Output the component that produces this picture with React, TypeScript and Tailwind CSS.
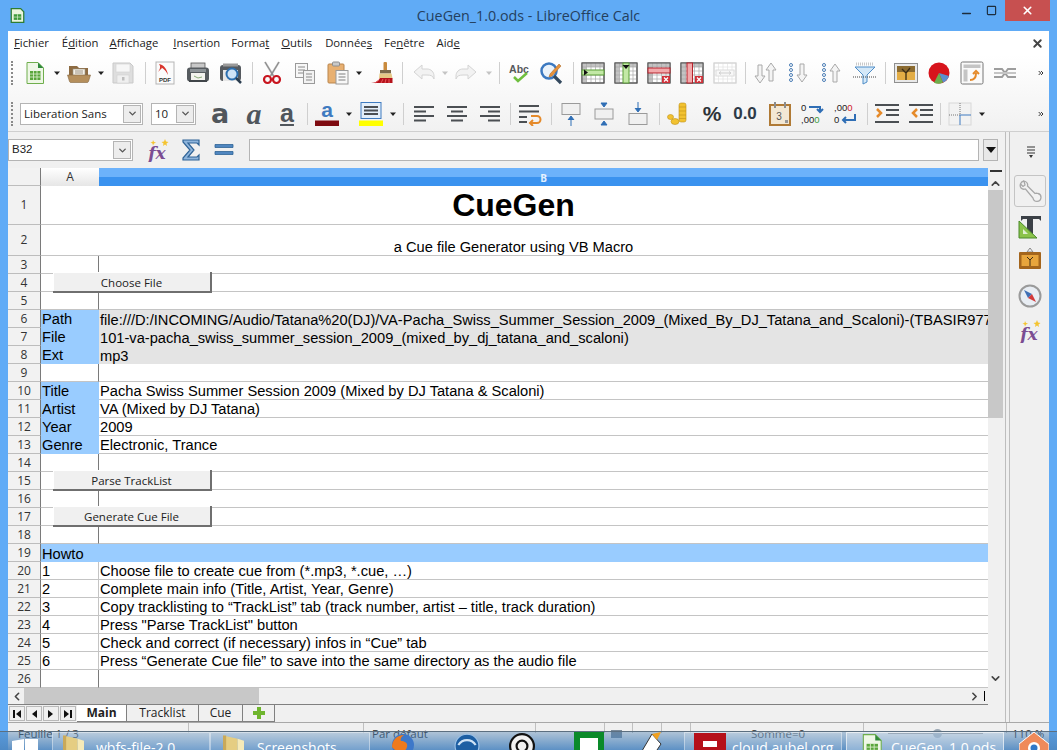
import type { ReactNode } from "react";
import { ChevronDown, ChevronLeft, ChevronRight, ChevronUp, ChevronsRight, Minus, Square, X } from "lucide-react";

type IconProps = { className?: string };

function Svg({ className = "", children }: IconProps & { children: ReactNode }) {
  return (
    <svg viewBox="0 0 24 24" className={`h-6 w-6 shrink-0 ${className}`}>
      {children}
    </svg>
  );
}

const NewCalc = ({ className }: IconProps) => (
  <Svg className={className}>
    <path d="M4 1.500h11l5.500 5.500v15.500H4z" fill="#eef7e6" stroke="#6fae4d" />
    <path d="M15 1.500l5.500 5.500H15z" fill="#2f8a3a" />
    <rect x="7" y="10" width="10.500" height="9" fill="#5aa63c" />
    <path d="M7 13h10.500M7 16h10.500M10.500 10v9M14 10v9" stroke="#dff0d0" strokeWidth=".8" />
  </Svg>
);
const OpenFolder = ({ className }: IconProps) => (
  <Svg className={className}>
    <path d="M2 5h8l2 2h9v8H2z" fill="#8d6b42" />
    <rect x="6" y="8" width="12" height="7" fill="#f3efe6" stroke="#9c9482" strokeWidth=".6" />
    <path d="M8 10h8M8 12h8" stroke="#8a8270" strokeWidth=".8" />
    <path d="M0.500 14h23l-2 6.500q-.3 1-1.500 1H4q-1.200 0-1.500-1z" fill="#b58f5c" stroke="#84663f" strokeWidth=".6" />
  </Svg>
);
const SaveDisk = ({ className }: IconProps) => (
  <Svg className={className}>
    <path d="M2 2h17l3 3v17H2z" fill="#dedede" stroke="#c9c9c9" />
    <rect x="5" y="3" width="14" height="8" fill="#f6f6f6" stroke="#cfcfcf" strokeWidth=".6" />
    <rect x="6" y="14" width="12" height="8" fill="#efefef" stroke="#cfcfcf" strokeWidth=".6" />
    <rect x="11" y="16" width="2.500" height="3.500" fill="#bdbdbd" />
  </Svg>
);
const PdfDoc = ({ className }: IconProps) => (
  <Svg className={className}>
    <rect x="3" y="1" width="18" height="22" fill="#fbfbfb" stroke="#b5b5b5" />
    <path d="M6 3c5 1 8 5 9 11-2-4-4-7-9-8l3 1-4 4c2-3 3-5 1-8z" fill="#d9352c" />
    <text x="12" y="21" textAnchor="middle" fontFamily="Liberation Sans" fontWeight="700" fontSize="6" fill="#333">PDF</text>
  </Svg>
);
const Printer = ({ className }: IconProps) => (
  <Svg className={className}>
    <rect x="5" y="2" width="14" height="6" fill="#c8c8c8" stroke="#555" strokeWidth=".8" />
    <rect x="1" y="6.500" width="22" height="14" rx="3" fill="#565b5f" />
    <rect x="4" y="8" width="16" height="3" fill="#8c9296" />
    <rect x="5" y="12" width="14" height="9" fill="#f3f3ee" />
    <path d="M8 15l4 2 4-1" stroke="#88aa77" fill="none" />
    <rect x="3" y="19" width="18" height="2" fill="#41464a" />
  </Svg>
);
const Preview = ({ className }: IconProps) => (
  <Svg className={className}>
    <rect x="1" y="4" width="21" height="16" rx="3" fill="#555a5f" />
    <rect x="4" y="2.500" width="15" height="3" fill="#9a9a9a" />
    <rect x="4" y="9" width="15" height="11" fill="#e7e7e7" />
    <circle cx="13" cy="13" r="5.500" fill="#cfe3f6" stroke="#2c6fb0" strokeWidth="2" />
    <path d="M17 17l5 5" stroke="#2c3e50" strokeWidth="2.500" />
  </Svg>
);
const Scissors = ({ className }: IconProps) => (
  <Svg className={className}>
    <path d="M5 1l8.500 14M19 1l-8.500 14" stroke="#b4b4b4" strokeWidth="2" />
    <path d="M5 1l8.500 14M19 1l-8.500 14" stroke="#6d6d6d" strokeWidth=".6" />
    <circle cx="7.500" cy="18.500" r="3.500" fill="none" stroke="#c8141e" strokeWidth="2.200" />
    <circle cx="16.500" cy="18.500" r="3.500" fill="none" stroke="#c8141e" strokeWidth="2.200" />
  </Svg>
);
const CopyDocs = ({ className }: IconProps) => (
  <Svg className={className}>
    <rect x="2.500" y="2.500" width="12" height="14" fill="#f7f7f7" stroke="#9a9a9a" />
    <path d="M5 6h7M5 9h7M5 12h5" stroke="#8a8a8a" />
    <rect x="10.500" y="9.500" width="11" height="13" fill="#f2f2f2" stroke="#9a9a9a" />
    <path d="M13 13h6M13 16h6M13 19h6" stroke="#8a8a8a" />
  </Svg>
);
const Paste = ({ className }: IconProps) => (
  <Svg className={className}>
    <rect x="2" y="3" width="16" height="19" rx="1" fill="#e8b071" stroke="#b9854d" />
    <rect x="6.500" y="1" width="7" height="4" rx="1" fill="#c9c9c9" stroke="#8e8e8e" />
    <rect x="10" y="9.500" width="12" height="13.500" fill="#f8f8f8" stroke="#9a9a9a" />
    <path d="M12.500 13h7M12.500 16h7M12.500 19h7" stroke="#7f7f7f" />
  </Svg>
);
const Brush = ({ className }: IconProps) => (
  <Svg className={className}>
    <rect x="13.500" y="1" width="3.500" height="9" rx="1" fill="#c98a3c" />
    <rect x="10" y="9" width="11" height="3.500" fill="#7b6a4b" />
    <path d="M9.500 12.500h12l1 5H9z" fill="#e6c987" />
    <path d="M1 22c5 0 8-3 9-5h12.500v5z" fill="#b5121b" />
    <path d="M5 22l4-3M11 22l2-4M15 22l1-4M19 22v-4" stroke="#e7555c" />
  </Svg>
);
const UndoIcon = ({ className }: IconProps) => (
  <Svg className={className}>
    <path d="M2 11l8-7v4h5c4 0 7 3 7 7v3c-1-3-3-4-7-4h-5v4z" fill="#f2f2f2" stroke="#d4d4d4" />
  </Svg>
);
const RedoIcon = ({ className }: IconProps) => (
  <Svg className={className}>
    <path d="M22 11l-8-7v4H9c-4 0-7 3-7 7v3c1-3 3-4 7-4h5v4z" fill="#f2f2f2" stroke="#d4d4d4" />
  </Svg>
);
const Spell = ({ className }: IconProps) => (
  <Svg className={className}>
    <text x="12" y="12" textAnchor="middle" fontFamily="Liberation Sans" fontWeight="700" fontSize="10.500" fill="#55585c">Abc</text>
    <path d="M7 16l4 4 9-8" fill="none" stroke="#6fbf3f" strokeWidth="2.500" />
  </Svg>
);
const FindReplace = ({ className }: IconProps) => (
  <Svg className={className}>
    <circle cx="10" cy="10" r="7.500" fill="#eaf2fa" stroke="#3b78c0" strokeWidth="2.500" />
    <path d="M15 15l7 7" stroke="#34495e" strokeWidth="3.200" />
    <path d="M11 13l9-10 2 2-9 10-3 1z" fill="#e8923a" stroke="#a35f1c" strokeWidth=".5" />
  </Svg>
);

function TableBase({ className, children, faded }: IconProps & { children?: ReactNode; faded?: boolean }) {
  const stroke = faded ? "#d5d5d5" : "#555";
  const line = faded ? "#e3e3e3" : "#a8a8a8";
  return (
    <Svg className={className}>
      <rect x="1" y="2" width="22" height="20" fill="#fff" stroke={stroke} />
      {!faded && <path d="M1 2h22v4H5.500v16H1z" fill="#c3c3c3" />}
      <path d="M1 6h22M1 10h22M1 14h22M1 18h22M5.500 2v20M10 2v20M14.500 2v20M19 2v20" stroke={line} strokeWidth=".7" />
      <rect x="1" y="2" width="22" height="20" fill="none" stroke={stroke} />
      {children}
    </Svg>
  );
}
const InsRow = ({ className }: IconProps) => (
  <TableBase className={className}>
    <rect x="1" y="9" width="22" height="5" fill="#c3e8a6" stroke="#5a9e36" />
    <path d="M3 8.500l4 3-4 3z" fill="#111" />
  </TableBase>
);
const InsCol = ({ className }: IconProps) => (
  <TableBase className={className}>
    <rect x="9" y="2" width="6" height="20" fill="#c3e8a6" stroke="#5a9e36" />
    <path d="M8.500 4h7L12 8z" fill="#111" />
  </TableBase>
);
const DelRow = ({ className }: IconProps) => (
  <TableBase className={className}>
    <rect x="1" y="7" width="22" height="5" fill="#f2a9ab" stroke="#b5212a" />
    <rect x="15" y="15" width="8" height="7" fill="#d0313a" />
    <path d="M17 16.500l4 4M21 16.500l-4 4" stroke="#fff" strokeWidth="1.300" />
  </TableBase>
);
const DelCol = ({ className }: IconProps) => (
  <TableBase className={className}>
    <rect x="7" y="2" width="5.500" height="20" fill="#f2a9ab" stroke="#b5212a" />
    <rect x="15" y="15" width="8" height="7" fill="#d0313a" />
    <path d="M17 16.500l4 4M21 16.500l-4 4" stroke="#fff" strokeWidth="1.300" />
  </TableBase>
);
const Merge = ({ className }: IconProps) => (
  <TableBase className={className} faded>
    <rect x="3" y="9" width="18" height="6" fill="#f7f7f7" stroke="#dcdcdc" />
    <path d="M6 12h12M8 10.500L6 12l2 1.500M16 10.500l2 1.500-2 1.500" fill="none" stroke="#cfcfcf" />
  </TableBase>
);

const ArrowUpOutline = ({ x, y = 0 }: { x: number; y?: number }) => (
  <path transform={`translate(${x} ${y})`} d="M5 2l5 7H7v11H3V9H0z" fill="#f4f4f4" stroke="#a9a9a9" />
);
const ArrowDownOutline = ({ x, y = 0 }: { x: number; y?: number }) => (
  <path transform={`translate(${x} ${y})`} d="M5 20l5-7H7V2H3v11H0z" fill="#f4f4f4" stroke="#a9a9a9" />
);
const BlueDots = () => (
  <g fill="#fff" stroke="#4a7db5">
    <circle cx="4" cy="4" r="1.500" />
    <circle cx="4" cy="9" r="1.500" />
    <circle cx="4" cy="14" r="1.500" />
    <circle cx="4" cy="19" r="1.500" />
  </g>
);
const SortBoth = ({ className }: IconProps) => (
  <Svg className={className}>
    <ArrowDownOutline x={1} y={2} />
    <ArrowUpOutline x={12} y={0} />
  </Svg>
);
const SortAsc = ({ className }: IconProps) => (
  <Svg className={className}>
    <BlueDots />
    <ArrowDownOutline x={10} y={1} />
  </Svg>
);
const SortDesc = ({ className }: IconProps) => (
  <Svg className={className}>
    <BlueDots />
    <ArrowUpOutline x={10} y={1} />
  </Svg>
);
const Filter = ({ className }: IconProps) => (
  <Svg className={className}>
    <path d="M3 3h18" stroke="#c9c9c9" strokeDasharray="1 1" strokeWidth="3" />
    <path d="M2 6h20l-8 8v7l-4 2v-9z" fill="#d4e8f8" stroke="#4f8dc7" />
    <path d="M0 16h24" stroke="#444" strokeDasharray="1 1" />
  </Svg>
);
const ImageIcon = ({ className }: IconProps) => (
  <Svg className={className}>
    <rect x="0.500" y="2.500" width="23" height="19" fill="#e9e9e9" stroke="#8f8f8f" />
    <rect x="3" y="5" width="18" height="14" fill="#e3ad45" />
    <rect x="3" y="5" width="18" height="6" fill="#8b6b30" />
    <path d="M12 19v-7l-4-4M12 12l4-5" stroke="#3c2d15" fill="none" strokeWidth="1.300" />
  </Svg>
);
const ChartPie = ({ className }: IconProps) => (
  <Svg className={className}>
    <circle cx="12" cy="12" r="10.500" fill="#d7141c" />
    <path d="M12 12l10 3a10.500 10.500 0 0 1-6 6.500z" fill="#5b8fcf" />
    <path d="M12 12l4 9.500a10.500 10.500 0 0 1-9 .2z" fill="#6fae4d" />
  </Svg>
);
const FrameIcon = ({ className }: IconProps) => (
  <Svg className={className}>
    <rect x="1" y="1" width="22" height="22" rx="1.500" fill="#fafafa" stroke="#777" />
    <rect x="3.500" y="3.500" width="17" height="3.500" fill="#c4c4c4" />
    <rect x="3.500" y="8.500" width="4" height="12" fill="#c4c4c4" />
    <path d="M10 19c5 0 6-3 6-7M13 13l3-3 3 3" fill="none" stroke="#e58a2a" strokeWidth="2" />
  </Svg>
);
const LinkIcon = ({ className }: IconProps) => (
  <Svg className={className}>
    <path d="M1 8h8l6 8h8M1 16h8l6-8h8" fill="none" stroke="#9d9d9d" strokeWidth="2" />
    <path d="M1 12h22" stroke="#c5c5c5" strokeWidth="2" />
  </Svg>
);

const FontBold = ({ className }: IconProps) => (
  <span className={`flex h-6 w-6 shrink-0 items-center justify-center font-['DejaVu_Sans',sans-serif] text-[27px] font-bold leading-none text-[#50565c] ${className}`}>
    a
  </span>
);
const FontItalic = ({ className }: IconProps) => (
  <span className={`flex h-6 w-6 shrink-0 items-center justify-center font-['Liberation_Serif',serif] text-[30px] font-bold italic leading-none text-[#50565c] ${className}`}>
    a
  </span>
);
const FontUnder = ({ className }: IconProps) => (
  <span className={`flex h-6 w-6 shrink-0 items-center justify-center font-['Liberation_Sans',sans-serif] text-[25px] font-bold leading-none text-[#50565c] underline decoration-2 underline-offset-2 ${className}`}>
    a
  </span>
);
const FontColor = ({ className }: IconProps) => (
  <Svg className={className}>
    <text x="12" y="15" textAnchor="middle" fontFamily="Liberation Sans" fontWeight="700" fontSize="21" fill="#3f7bc0">a</text>
    <rect x="0" y="18.500" width="24" height="5.500" fill="#7e0a10" />
  </Svg>
);
const BgColor = ({ className }: IconProps) => (
  <Svg className={className}>
    <rect x="2" y="0.500" width="20" height="16" fill="#e4effa" stroke="#3f7bc0" />
    <path d="M5 5h14M5 8.500h14M5 12h14" stroke="#4b4f53" strokeWidth="2" />
    <rect x="0" y="18.500" width="24" height="5.500" fill="#ffff00" />
  </Svg>
);
const Align = ({ className, kind }: IconProps & { kind: "l" | "c" | "r" }) => {
  const d =
    kind === "l"
      ? "M2 5h20M2 9.500h12M2 14h20M2 18.500h12"
      : kind === "c"
        ? "M2 5h20M6 9.500h12M2 14h20M6 18.500h12"
        : "M2 5h20M10 9.500h12M2 14h20M10 18.500h12";
  return (
    <Svg className={className}>
      <path d={d} stroke="#4b4f53" strokeWidth="2" />
    </Svg>
  );
};
const WrapText = ({ className }: IconProps) => (
  <Svg className={className}>
    <path d="M1 4h20M1 9.500h20M1 15h8M1 20h8" stroke="#4b4f53" strokeWidth="2" />
    <path d="M13 14h6a3.500 3.500 0 0 1 0 7h-6M15 18l-3 3 3 3" fill="none" stroke="#e58a2a" strokeWidth="2" />
  </Svg>
);
const VAlign = ({ className, kind }: IconProps & { kind: "t" | "m" | "b" }) => (
  <Svg className={className}>
    {kind === "t" && (
      <>
        <rect x="3" y="1.500" width="18" height="11" fill="#f0f0f0" stroke="#9a9a9a" />
        <path d="M12 24v-8M9 18l3-4 3 4" fill="#2f6eb5" stroke="#2f6eb5" />
      </>
    )}
    {kind === "m" && (
      <>
        <rect x="3" y="7" width="18" height="10" fill="#f0f0f0" stroke="#9a9a9a" />
        <path d="M9 1h6l-3 4zM9 23h6l-3-4z" fill="#2f6eb5" stroke="#2f6eb5" />
      </>
    )}
    {kind === "b" && (
      <>
        <rect x="3" y="11.500" width="18" height="11" fill="#f0f0f0" stroke="#9a9a9a" />
        <path d="M12 0v8M9 6l3 4 3-4" fill="#2f6eb5" stroke="#2f6eb5" />
      </>
    )}
  </Svg>
);
const Coins = ({ className }: IconProps) => (
  <Svg className={className}>
    <rect x="12" y="1" width="7" height="19" rx="2" fill="#f2c230" stroke="#c0921a" strokeWidth=".6" />
    <path d="M12 5h7M12 9h7M12 13h7M12 16.500h7" stroke="#c0921a" strokeWidth=".6" />
    <ellipse cx="8" cy="19.500" rx="4" ry="3" fill="#f2c230" stroke="#c0921a" strokeWidth=".6" />
    <ellipse cx="3.500" cy="15" rx="3" ry="2.500" fill="#f2c230" stroke="#c0921a" strokeWidth=".6" />
  </Svg>
);
const Calendar = ({ className }: IconProps) => (
  <Svg className={className}>
    <rect x="2" y="3" width="20" height="20" fill="#f3e8d4" stroke="#b07a35" strokeWidth="2" />
    <path d="M7 0v6M17 0v6" stroke="#8d8d8d" strokeWidth="2" />
    <text x="11" y="18" textAnchor="middle" fontFamily="Liberation Sans" fontSize="10" fill="#555">3</text>
    <rect x="17" y="18" width="3" height="3" fill="#999" />
  </Svg>
);
const DecAdd = ({ className }: IconProps) => (
  <Svg className={className}>
    <text x="0" y="9" fontFamily="Liberation Sans" fontSize="9.500" fill="#222">0</text>
    <path d="M8 5h11v4M16 7l3 3 3-3" fill="none" stroke="#2f6eb5" strokeWidth="2" />
    <text x="0" y="21" fontFamily="Liberation Sans" fontSize="9.500" fill="#222">,00<tspan fill="#3a9a3a">0</tspan></text>
  </Svg>
);
const DecDel = ({ className }: IconProps) => (
  <Svg className={className}>
    <text x="1" y="9" fontFamily="Liberation Sans" fontSize="9.500" fill="#222">,00<tspan fill="#d0202a">0</tspan></text>
    <text x="1" y="21" fontFamily="Liberation Sans" fontSize="9.500" fill="#222">0</text>
    <path d="M22 12v6H10M13 15l-3 3 3 3" fill="none" stroke="#2f6eb5" strokeWidth="2" />
  </Svg>
);
const Indent = ({ className, back }: IconProps & { back?: boolean }) => (
  <Svg className={className}>
    <path d="M0 3h24M11 8h13M11 13h13M0 20h24" stroke="#4b4f53" strokeWidth="2" />
    <path d={back ? "M8 7l-4 4 4 4" : "M2 7l4 4-4 4"} fill="none" stroke="#e58a2a" strokeWidth="2.500" />
  </Svg>
);
const Borders = ({ className }: IconProps) => (
  <Svg className={className}>
    <rect x="1" y="1" width="22" height="22" fill="#f2f2f2" stroke="#d8d8d8" />
    <path d="M1 13h11" stroke="#777" strokeDasharray="1 1" />
    <path d="M12 1v12" stroke="#777" strokeDasharray="1 1" />
    <path d="M12 13h11M12 13v10" stroke="#3f7bc0" />
  </Svg>
);
const FxIcon = ({ className }: IconProps) => (
  <Svg className={className}>
    <text x="11" y="21" textAnchor="middle" fontFamily="DejaVu Serif" fontStyle="italic" fontWeight="700" fontSize="17" fill="#7b4d92">fx</text>
    <path d="M7 2l1 2 2 .5-2 1-1 2-.5-2-2-1 2-.5zM19 1l1 2.500 2.500.5-2 1.500.5 2.500-2-1.500-2 1.500.5-2.500-2-1.500 2.500-.5z" fill="#f4c430" />
  </Svg>
);
const SigmaIcon = ({ className }: IconProps) => (
  <Svg className={className}>
    <path d="M4 2h16v5l-2-2H9l6 7-6 7h9l2-2v5H4v-2l7-8-7-8z" fill="#8fb5dc" stroke="#2f6396" strokeWidth="1.200" />
  </Svg>
);
const EqualsIcon = ({ className }: IconProps) => (
  <Svg className={className}>
    <path d="M3 6.500h18v3H3zM3 13.500h18v3H3z" fill="#4f86c0" stroke="#2f6396" strokeWidth=".8" />
  </Svg>
);

const Sep = ({ className }: IconProps) => <div className={`h-[22px] w-px shrink-0 bg-[#cfcfcf] ${className}`} />;
const Caret = ({ className, off }: IconProps & { off?: boolean }) => (
  <svg viewBox="0 0 8 8" className={`h-2 w-2 shrink-0 ${className}`}>
    <path d="M1 2.500h6L4 6z" fill={off ? "#c4c4c4" : "#222"} />
  </svg>
);
const Gripper = () => (
  <div className="ml-[3px] h-[24px] w-[3px] shrink-0 border-l-2 border-dotted border-[#8a8a8a]" />
);
const More = ({ className }: IconProps) => (
  <ChevronsRight size={10} strokeWidth={3} className={`w-2 shrink-0 text-[#333] ${className}`} />
);

function Combo({ className, label, btn }: IconProps & { label: string; btn: string }) {
  return (
    <div className={`flex h-[22px] shrink-0 items-center justify-between border border-[#b4b4b4] bg-white pl-[3px] pr-px text-[11.500px] text-[#222] ${className}`}>
      <span className="truncate">{label}</span>
      <span className={`flex h-[18px] items-center justify-center border border-[#b4b4b4] bg-[#ededed] ${btn}`}>
        <ChevronDown size={11} strokeWidth={3} className="text-[#555]" />
      </span>
    </div>
  );
}

const menus: [string, string, string, string][] = [
  ["ml-[6px]", "", "F", "ichier"],
  ["ml-[13px]", "É", "d", "ition"],
  ["ml-[11px]", "", "A", "ffichage"],
  ["ml-[15px]", "", "I", "nsertion"],
  ["ml-[11px]", "Forma", "t", ""],
  ["ml-[12px]", "", "O", "utils"],
  ["ml-[13px]", "Donnée", "s", ""],
  ["ml-[12px]", "Fe", "n", "être"],
  ["ml-[12px]", "Aid", "e", ""],
];

type Row = { n: number; h: string; a?: string; b?: string; tone?: "info" | "meta" | "head" | "step"; btn?: string; merged?: "title" | "sub" };

const rows: Row[] = [
  { n: 1, h: "h-[39px]", merged: "title", b: "CueGen" },
  { n: 2, h: "h-[31px]", merged: "sub", b: "a Cue file Generator using VB Macro" },
  { n: 3, h: "h-[18px]" },
  { n: 4, h: "h-[18px]", btn: "Choose File" },
  { n: 5, h: "h-[18px]" },
  { n: 6, h: "h-[18px]", tone: "info", a: "Path", b: "file:///D:/INCOMING/Audio/Tatana%20(DJ)/VA-Pacha_Swiss_Summer_Session_2009_(Mixed_By_DJ_Tatana_and_Scaloni)-(TBASIR977)-WEB-2009" },
  { n: 7, h: "h-[18px]", tone: "info", a: "File", b: "101-va-pacha_swiss_summer_session_2009_(mixed_by_dj_tatana_and_scaloni)" },
  { n: 8, h: "h-[18px]", tone: "info", a: "Ext", b: "mp3" },
  { n: 9, h: "h-[18px]" },
  { n: 10, h: "h-[18px]", tone: "meta", a: "Title", b: "Pacha Swiss Summer Session 2009 (Mixed by DJ Tatana & Scaloni)" },
  { n: 11, h: "h-[18px]", tone: "meta", a: "Artist", b: "VA (Mixed by DJ Tatana)" },
  { n: 12, h: "h-[18px]", tone: "meta", a: "Year", b: "2009" },
  { n: 13, h: "h-[18px]", tone: "meta", a: "Genre", b: "Electronic, Trance" },
  { n: 14, h: "h-[18px]" },
  { n: 15, h: "h-[18px]", btn: "Parse TrackList" },
  { n: 16, h: "h-[18px]" },
  { n: 17, h: "h-[18px]", btn: "Generate Cue File" },
  { n: 18, h: "h-[18px]" },
  { n: 19, h: "h-[18px]", tone: "head", a: "Howto" },
  { n: 20, h: "h-[18px]", tone: "step", a: "1", b: "Choose file to create cue from (*.mp3, *.cue, …)" },
  { n: 21, h: "h-[18px]", tone: "step", a: "2", b: "Complete main info (Title, Artist, Year, Genre)" },
  { n: 22, h: "h-[18px]", tone: "step", a: "3", b: "Copy tracklisting to “TrackList” tab (track number, artist – title, track duration)" },
  { n: 23, h: "h-[18px]", tone: "step", a: "4", b: "Press \"Parse TrackList\" button" },
  { n: 24, h: "h-[18px]", tone: "step", a: "5", b: "Check and correct (if necessary) infos in “Cue” tab" },
  { n: 25, h: "h-[18px]", tone: "step", a: "6", b: "Press “Generate Cue file” to save into the same directory as the audio file" },
  { n: 26, h: "h-[18px]" },
];

function SheetRow({ row }: { row: Row }) {
  const { n, h, a, b, tone, btn, merged } = row;
  const blue = tone === "info" || tone === "meta";
  return (
    <div className={`relative flex shrink-0 ${h}`}>
      <div className="flex w-[33px] shrink-0 items-center justify-center border-r border-b border-r-[#7a7a7a] border-b-[#bdbdbd] bg-[#f2f2f2] font-['Open_Sans',sans-serif] text-[12px] text-[#333]">
        {n}
      </div>
      {merged ? (
        <div
          className={`flex flex-1 justify-center border-b border-[#c4c4c4] pr-[2px] ${
            merged === "title" ? "items-center text-[32px] font-bold leading-none" : "items-end text-[14.670px] leading-[16px]"
          }`}
        >
          {b}
        </div>
      ) : tone === "head" ? (
        <div className="flex flex-1 items-center bg-[#99ccff] pl-px pt-px text-[14.670px]">{a}</div>
      ) : (
        <>
          <div
            className={`flex w-[58px] shrink-0 items-center border-r pl-px pt-px text-[14.670px] ${
              blue
                ? "border-b border-[#99ccff] bg-[#99ccff]"
                : tone === "step"
                  ? "border-b border-b-[#c4c4c4] border-r-[#c4c4c4]"
                  : "border-b border-b-[#c4c4c4] border-r-[#7a7a7a]"
            }`}
          >
            {a}
          </div>
          <div
            className={`flex min-w-0 flex-1 items-center overflow-hidden whitespace-nowrap pl-px pt-px text-[14.670px] ${
              tone === "info" ? "bg-[#e4e4e4]" : "border-b border-[#c4c4c4]"
            }`}
          >
            {b}
          </div>
        </>
      )}
      {btn && (
        <button className="absolute left-[45px] top-[-2px] z-10 h-[21px] w-[159px] border-r-2 border-b-2 border-r-[#6f6f6f] border-b-[#6f6f6f] bg-[#f0f0f0] pt-[2px] font-['Open_Sans',sans-serif] text-[11.500px] text-[#222] shadow-[inset_1px_1px_0_#fff]">
          {btn}
        </button>
      )}
    </div>
  );
}

const tabs = [
  { label: "Main", cls: "w-[50px] bg-white font-bold" },
  { label: "Tracklist", cls: "w-[72px]" },
  { label: "Cue", cls: "w-[44px]" },
];

const statusSeps = [
  "ml-[180px]", "ml-[174px]", "ml-[171px]", "ml-[68px]", "ml-[27px]", "ml-[28px]", "ml-[28px]", "ml-[172px]", "ml-[142px]",
];

function NavButton({ d }: { d: string }) {
  return (
    <span className="flex h-[15px] w-[16px] items-center justify-center border border-[#b9b9b9] bg-[#f0f0f0]">
      <svg viewBox="0 0 12 12" className="h-3 w-3">
        <path d={d} fill="#111" />
      </svg>
    </span>
  );
}

const FolderGlyph = ({ className }: IconProps) => (
  <svg viewBox="0 0 20 24" className={`h-[26px] w-[21px] shrink-0 ${className}`}>
    <path d="M0 2l14 3v19H0z" fill="#e5cd82" />
    <path d="M14 5l6 2v17h-6z" fill="#f6eab8" />
    <path d="M0 2l3 0v22H0z" fill="#c9a95a" />
  </svg>
);

function TaskButton({ className, icon, label }: IconProps & { icon: ReactNode; label: string }) {
  return (
    <div className={`flex h-[20px] shrink-0 items-start gap-[6px] overflow-hidden border border-white/40 bg-white/15 pl-[9px] text-[14px] leading-[29px] text-white ${className}`}>
      {icon}
      <span className="whitespace-nowrap">{label}</span>
    </div>
  );
}

function Taskbar() {
  return (
    <div className="absolute inset-x-0 top-[731px] flex h-[19px] items-start overflow-hidden border-t border-[#5c6f80] bg-gradient-to-b from-[#4c7fb0]/40 to-[#4c86c0]/90 font-['Open_Sans',sans-serif]">
      <svg viewBox="0 0 26 12" className="ml-[12px] mt-[7px] h-[12px] w-[26px] shrink-0">
        <path d="M0 2l12-2v12H0zM13 0l13-2v14H13z" fill="#fff" />
      </svg>
      <TaskButton className="ml-[14px] w-[158px]" icon={<FolderGlyph className="ml-px mr-[6px]" />} label="wbfs-file-2.0" />
      <TaskButton className="w-[160px]" icon={<FolderGlyph className="ml-[3px] mr-[7px]" />} label="Screenshots" />
      <svg viewBox="0 0 24 24" className="ml-[20px] mt-[1px] h-[24px] w-[24px] shrink-0">
        <circle cx="13" cy="12" r="11" fill="#3d78c9" />
        <path d="M2 14c0-7 5-12 12-12-3 2-4 4-3 6 4 0 7 2 6 6-2 6-8 8-15 0z" fill="#ee7a1d" />
      </svg>
      <svg viewBox="0 0 24 24" className="ml-[40px] h-[26px] w-[26px] shrink-0">
        <circle cx="12" cy="13" r="11" fill="#1d5fa3" stroke="#9dc3e8" />
        <path d="M4 12c4-6 12-6 16 0" fill="none" stroke="#cfe3f5" strokeWidth="2" />
      </svg>
      <svg viewBox="0 0 24 24" className="ml-[29px] h-[26px] w-[26px] shrink-0">
        <circle cx="12" cy="13" r="11" fill="#f2f2f2" stroke="#111" strokeWidth="2" />
        <circle cx="12" cy="13" r="5" fill="none" stroke="#111" strokeWidth="2" />
      </svg>
      <div className="ml-[39px] flex h-[24px] w-[30px] shrink-0 justify-center bg-[#0a8a2a] pt-[6px]">
        <div className="h-[14px] w-[18px] bg-white" />
      </div>
      <svg viewBox="0 0 24 24" className="ml-[30px] h-[24px] w-[30px] shrink-0">
        <path d="M2 24L15 2l9 10-8 12z" fill="#fff" stroke="#333" />
        <path d="M15 2l9-2-4 8z" fill="#f0a020" />
      </svg>
      <TaskButton
        className="ml-[20px] w-[158px]"
        icon={
          <span className="block h-[26px] w-[32px] shrink-0 bg-[#b5101a] pl-[9px] pt-[8px]">
            <span className="block h-[6px] w-[14px] bg-white" />
          </span>
        }
        label="cloud.aubel.org"
      />
      <TaskButton
        className="ml-[4px] w-[158px] border-white/60 bg-white/30"
        icon={
          <span className="ml-[3px] block h-[26px] w-[26px] shrink-0">
            <NewCalc className="h-[26px]! w-[26px]!" />
          </span>
        }
        label="CueGen_1.0.ods"
      />
      <svg viewBox="0 0 30 24" className="ml-[15px] h-[24px] w-[30px] shrink-0">
        <path d="M15 0l15 12v12H0V12z" fill="#ef8a5a" stroke="#fff" />
        <circle cx="15" cy="16" r="6" fill="#fff" />
        <circle cx="15" cy="16" r="3.500" fill="#2f78c8" />
      </svg>
    </div>
  );
}

export default function App() {
  return (
    <div className="relative h-[750px] w-[1057px] overflow-hidden bg-[#60abf6] font-['Liberation_Sans',sans-serif] text-black">
      {/* title bar */}
      <div className="relative flex h-[31px] items-start">
        <svg viewBox="0 0 24 24" className="ml-[10px] mt-[7px] h-[17px] w-[15px]">
          <path d="M2 1h15l5 5v17H2z" fill="#eaf5de" stroke="#2f7d32" strokeWidth="2" />
          <rect x="6" y="10" width="12" height="9" fill="#3f9a3a" />
          <path d="M6 14.500h12M12 10v9" stroke="#e6f5da" />
        </svg>
        <div className="absolute inset-x-0 top-[5px] text-center font-['Open_Sans',sans-serif] text-[14.300px] leading-[22px] text-[#24405e]">
          CueGen_1.0.ods - LibreOffice Calc
        </div>
        <div className="relative ml-auto mr-[7px] flex h-[21px] items-center">
          <Minus size={13} strokeWidth={3} className="mr-[13px] mt-[6px] text-[#1d2d3d]" />
          <Square size={11} strokeWidth={2.5} className="mr-[8px] text-[#1d2d3d]" />
          <span className="flex h-[21px] w-[45px] items-center justify-center bg-[#c75050]">
            <X size={13} strokeWidth={3} className="text-white" />
          </span>
        </div>
      </div>

      <div className="mr-[8px] ml-[8px] flex h-[719px] flex-col bg-[#f0f0f0]">
        {/* menu */}
        <div className="flex h-[24px] items-center bg-white font-['Open_Sans',sans-serif] text-[11.300px] text-[#222]">
          {menus.map(([ml, pre, key, post]) => (
            <span key={pre + key + post} className={ml}>
              {pre}
              <u>{key}</u>
              {post}
            </span>
          ))}
          <X size={13} strokeWidth={3.5} className="ml-auto mr-[5px] text-[#444]" />
        </div>

        <div className="bg-gradient-to-b from-white to-[#f1f1f1] font-['Open_Sans',sans-serif]">
          {/* standard toolbar */}
          <div className="flex h-[36px] items-center">
            <Gripper />
            <NewCalc className="ml-[9px]" />
            <Caret className="ml-[6px]" />
            <OpenFolder className="ml-[6px]" />
            <Caret className="ml-[6px]" />
            <SaveDisk className="ml-[6px]" />
            <Sep className="ml-[10px]" />
            <PdfDoc className="ml-[7px]" />
            <Printer className="ml-[9px]" />
            <Preview className="ml-[9px]" />
            <Sep className="ml-[9px]" />
            <Scissors className="ml-[7px]" />
            <CopyDocs className="ml-[9px]" />
            <Paste className="ml-[9px]" />
            <Caret className="ml-[5px]" />
            <Brush className="ml-[7px]" />
            <Sep className="ml-[8px]" />
            <UndoIcon className="ml-[9px]" />
            <Caret className="ml-[5px]" off />
            <RedoIcon className="ml-[5px]" />
            <Caret className="ml-[7px]" off />
            <Sep className="ml-[6px]" />
            <Spell className="ml-[7px]" />
            <FindReplace className="ml-[8px]" />
            <Sep className="ml-[10px]" />
            <InsRow className="ml-[7px]" />
            <InsCol className="ml-[9px]" />
            <DelRow className="ml-[9px]" />
            <DelCol className="ml-[9px]" />
            <Merge className="ml-[9px]" />
            <Sep className="ml-[8px]" />
            <SortBoth className="ml-[8px]" />
            <SortAsc className="ml-[9px]" />
            <SortDesc className="ml-[9px]" />
            <Filter className="ml-[9px]" />
            <Sep className="ml-[8px]" />
            <ImageIcon className="ml-[8px]" />
            <ChartPie className="ml-[9px]" />
            <FrameIcon className="ml-[9px]" />
            <LinkIcon className="ml-[9px]" />
            <More className="ml-[20px]" />
          </div>

          {/* formatting toolbar */}
          <div className="flex h-[41px] items-center border-b border-[#cfcfcf] pt-[5px]">
            <Gripper />
            <Combo className="ml-[6px] w-[123px]" label="Liberation Sans" btn="w-[18px]" />
            <Combo className="ml-[8px] w-[45px]" label="10" btn="w-[18px]" />
            <FontBold className="ml-[12px]" />
            <FontItalic className="ml-[10px]" />
            <FontUnder className="ml-[9px]" />
            <Sep className="ml-[8px]" />
            <FontColor className="ml-[7px]" />
            <Caret className="ml-[6px]" />
            <BgColor className="ml-[6px]" />
            <Caret className="ml-[6px]" />
            <Sep className="ml-[6px]" />
            <Align className="ml-[8px]" kind="l" />
            <Align className="ml-[9px]" kind="c" />
            <Align className="ml-[9px]" kind="r" />
            <Sep className="ml-[8px]" />
            <WrapText className="ml-[7px]" />
            <Sep className="ml-[9px]" />
            <VAlign className="ml-[7px]" kind="t" />
            <VAlign className="ml-[9px]" kind="m" />
            <VAlign className="ml-[10px]" kind="b" />
            <Sep className="ml-[9px]" />
            <Coins className="ml-[7px]" />
            <span className="ml-[9px] w-6 shrink-0 text-center font-['Liberation_Sans',sans-serif] text-[21px] font-bold leading-none text-[#2d3338]">%</span>
            <span className="ml-[9px] w-6 shrink-0 whitespace-nowrap text-center font-['Liberation_Sans',sans-serif] text-[17px] font-bold leading-none text-[#2d3a47]">0.0</span>
            <Calendar className="ml-[11px]" />
            <DecAdd className="ml-[9px]" />
            <DecDel className="ml-[8px]" />
            <Sep className="ml-[10px]" />
            <Indent className="ml-[7px]" />
            <Indent className="ml-[10px]" back />
            <Sep className="ml-[7px]" />
            <Borders className="ml-[7px]" />
            <Caret className="ml-[6px]" />
            <More className="ml-[51px]" />
          </div>
        </div>

        <div className="flex min-h-0 flex-1">
          {/* sheet column */}
          <div className="flex w-[997px] shrink-0 flex-col">
            {/* formula bar */}
            <div className="flex h-[36px] shrink-0 items-center">
              <Combo className="w-[125px]" label="B32" btn="w-[18px]" />
              <FxIcon className="ml-[13px]" />
              <SigmaIcon className="ml-[9px]" />
              <EqualsIcon className="ml-[9px]" />
              <div className="ml-[13px] h-[22px] w-[730px] border border-[#b4b4b4] bg-white" />
              <div className="ml-[4px] flex h-[22px] w-[15px] items-center justify-center border border-[#b4b4b4] bg-[#e8e8e8]">
                <svg viewBox="0 0 10 6" className="h-[6px] w-[10px]">
                  <path d="M0 0h10L5 6z" fill="#111" />
                </svg>
              </div>
            </div>

            <div className="flex min-h-0 flex-1">
              {/* cells */}
              <div className="flex w-[980px] shrink-0 flex-col overflow-hidden bg-white">
                <div className="flex h-[18px] shrink-0">
                  <div className="w-[33px] border-r border-b border-r-[#7a7a7a] border-b-[#bdbdbd] bg-[#f2f2f2]" />
                  <div className="flex w-[58px] items-center justify-center bg-gradient-to-b from-white to-[#e6e6e6] font-['Open_Sans',sans-serif] text-[12px] text-[#333]">
                    A
                  </div>
                  <div className="relative flex-1 bg-[#3a92ef]">
                    <div className="h-[9px] bg-[#6cb2fb]" />
                    <span className="absolute inset-x-0 top-[3px] text-center font-['Open_Sans',sans-serif] text-[10px] font-bold leading-[14px] text-white/85">B</span>
                  </div>
                </div>
                {rows.map((row) => (
                  <SheetRow key={row.n} row={row} />
                ))}
              </div>

              {/* vertical scrollbar */}
              <div className="flex w-[15px] shrink-0 flex-col items-center bg-[#f0f0f0]">
                <div className="mt-[2px] h-[2px] w-[12px] bg-[#333]" />
                <ChevronUp size={13} strokeWidth={3} className="mt-[5px] text-[#444]" />
                <div className="h-[228px] w-full bg-[#c8c8c8]" />
                <ChevronDown size={13} strokeWidth={3} className="mt-auto mb-[3px] text-[#444]" />
              </div>
              <div className="w-[2px] shrink-0" />
            </div>

            {/* horizontal scrollbar */}
            <div className="flex h-[16px] shrink-0 items-center">
              <ChevronLeft size={13} strokeWidth={3} className="ml-[2px] w-[14px] text-[#444]" />
              <div className="h-full w-[235px] bg-[#c8c8c8]" />
              <ChevronRight size={13} strokeWidth={3} className="ml-[709px] text-[#444]" />
              <div className="ml-[3px] h-[10px] w-px bg-black" />
            </div>

            {/* sheet tabs */}
            <div className="flex h-[18px] w-[980px] shrink-0 items-stretch border-t border-[#808080] text-[12px]">
              <div className="flex w-[69px] items-center gap-px pl-px">
                <NavButton d="M2 2h2v8H2zM10 2v8L5 6z" />
                <NavButton d="M9 2v8L4 6z" />
                <NavButton d="M3 2v8l5-4z" />
                <NavButton d="M2 2v8l5-4zM8 2h2v8H8z" />
              </div>
              {tabs.map((t) => (
                <div key={t.label} className={`flex items-center justify-center border-r border-b border-[#808080] font-['Open_Sans',sans-serif] text-[#222] ${t.cls}`}>
                  {t.label}
                </div>
              ))}
              <div className="flex w-[32px] items-center justify-center border-r border-b border-[#808080]">
                <svg viewBox="0 0 12 12" className="h-3 w-3">
                  <path d="M4 0h4v4h4v4H8v4H4V8H0V4h4z" fill="#6fb52e" />
                </svg>
              </div>
            </div>
          </div>

          {/* deck */}
          <div className="flex flex-1 border-l border-[#bdbdbd]">
            <div className="w-[3px] shrink-0" />
            <div className="flex flex-1 flex-col items-center border-l border-[#bdbdbd]">
              <svg viewBox="0 0 12 12" className="ml-[2px] mt-[14px] h-3 w-3">
                <path d="M2 1h8M2 4h8M2 7h8" stroke="#333" />
                <path d="M4 9h4l-2 3z" fill="#333" />
              </svg>
              <div className="mt-[17px] flex h-[32px] w-[32px] items-center justify-center rounded-[3px] border border-[#c4c4c4]">
                <svg viewBox="0 0 24 24" className="h-6 w-6">
                  <path d="M6 2a4.500 4.500 0 0 0-3 7c1 1 3 1.500 4.500 1L15 19a4 4 0 1 0 5-4.500c-1.500-.5-3 0-3 0L9.500 7c.5-2-.5-4-3.500-5l1 4-2 1.500L2.500 5" fill="#f2f2f2" stroke="#a8a8a8" strokeWidth="1.300" />
                </svg>
              </div>
              <svg viewBox="0 0 24 24" className="mt-[8px] h-[24px] w-[24px]">
                <path d="M3 1h20v5l-2-2h-6v18H9V4H5L3 6z" fill="#3b4046" />
                <path d="M1 23V6l18 17z" fill="#8bc34a" stroke="#4a8a2a" />
                <path d="M5 19v-5l5 5z" fill="#dff0d0" />
              </svg>
              <svg viewBox="0 0 24 24" className="mt-[9px] h-[24px] w-[24px]">
                <path d="M12 0l3 4H9z" fill="none" stroke="#888" />
                <rect x="1" y="4" width="22" height="17" rx="1" fill="#a4651c" />
                <rect x="3.500" y="7" width="17" height="11" fill="#e8a53c" />
                <path d="M12 18v-6l-3-3M12 12l3-3" stroke="#3c2d15" fill="none" />
              </svg>
              <svg viewBox="0 0 24 24" className="mt-[12px] h-[24px] w-[24px]">
                <circle cx="12" cy="12" r="10.500" fill="#e8edf3" stroke="#9a9a9a" strokeWidth="2" />
                <path d="M6 6l8 4-4 4z" fill="#3f6fb5" />
                <path d="M18 18l-8-4 4-4z" fill="#d23a3a" />
              </svg>
              <FxIcon className="mt-[11px]" />
            </div>
          </div>
        </div>

        {/* status bar */}
        <div className="relative h-[28px] shrink-0 border-t border-[#a8a8a8] bg-[#f0f0f0] font-['Open_Sans',sans-serif] text-[11.500px] text-[#333]">
          <span className="absolute left-[10px] top-[2px]">Feuille 1 / 3</span>
          <span className="absolute left-[364px] top-[2px]">Par défaut</span>
          <div className="absolute left-[603px] top-[7px] h-[8px] w-[11px] bg-[#7a8a9a]" />
          <span className="absolute left-[743px] top-[2px]">Somme=0</span>
          <div className="absolute left-[880px] top-[10px] h-px w-[95px] bg-[#8a8a8a]" />
          <div className="absolute left-[925px] top-[6px] h-[9px] w-[9px] rounded-full bg-[#9aa7b3]" />
          <span className="absolute left-[1004px] top-[2px] whitespace-nowrap">110 %</span>
          <div className="flex h-[10px] items-start">
            {statusSeps.map((ml, i) => (
              <div key={i} className={`h-[10px] w-px bg-[#c0c0c0] ${ml}`} />
            ))}
          </div>
        </div>
      </div>

      <Taskbar />
    </div>
  );
}
